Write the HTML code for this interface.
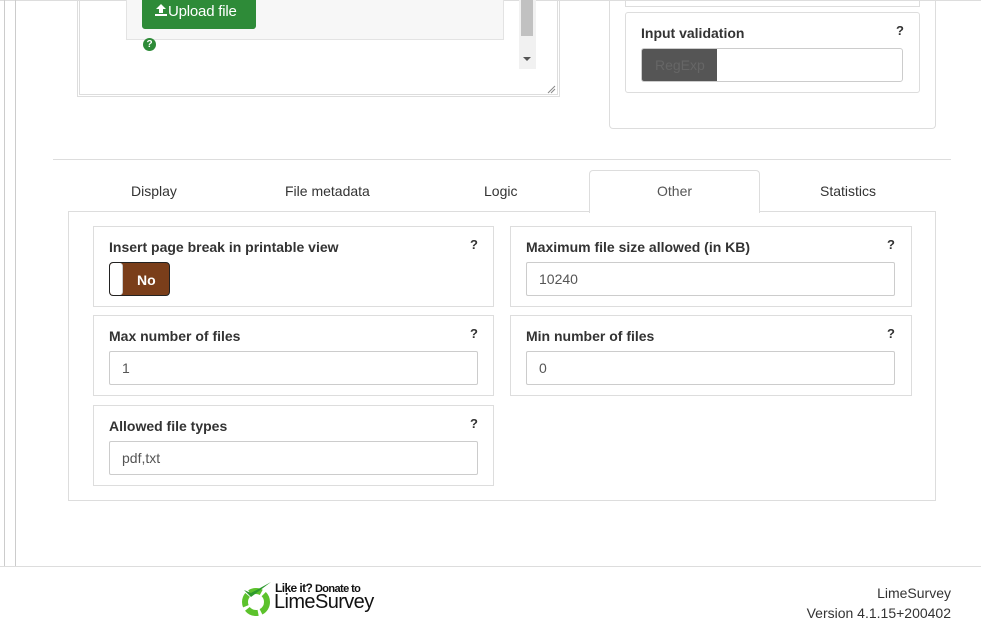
<!DOCTYPE html>
<html><head><meta charset="utf-8"><style>
*{box-sizing:border-box;margin:0;padding:0}
body{width:981px;height:626px;overflow:hidden;background:#fff;font-family:"Liberation Sans",sans-serif;position:relative;color:#333}
.a{position:absolute}
.lbl{font-size:14px;font-weight:bold;color:#333}
.q{font-size:13px;font-weight:bold;color:#333}
.inp{position:absolute;border:1px solid #ccc;border-radius:2px;height:34px;font-size:14px;color:#555;padding:8px 12px}
.box{position:absolute;border:1px solid #ddd}
.tab{position:absolute;top:183px;font-size:14px;color:#333}
</style></head><body>
<div class="a" style="left:0;top:0;width:981px;height:1px;background:#ddd"></div>
<div class="a" style="left:4px;top:0;width:1px;height:566px;background:#ccc"></div>
<div class="a" style="left:15px;top:0;width:1px;height:566px;background:#ccc"></div>
<div class="a" style="left:0;top:566px;width:981px;height:1px;background:#ddd"></div>

<div class="a" style="left:77px;top:0;width:483px;height:97px;border:1px solid #ddd;border-top:none"></div>
<div class="a" style="left:79px;top:0;width:479px;height:95px;border:1px solid #ddd;border-top:none"></div>
<div class="a" style="left:126px;top:0;width:378px;height:40px;background:#f7f7f7;border:1px solid #e3e3e3;border-top:none"></div>
<div class="a" style="left:142px;top:0;width:114px;height:29px;background:#2e8b38;border-radius:0 0 3px 3px;color:#fff;font-size:15px;padding:3px 0 0 12px;letter-spacing:-0.2px">
<svg width="14" height="14" viewBox="0 0 14 14" style="vertical-align:-1px"><path d="M7 1 L12 6 H9 V10 H5 V6 H2 Z" fill="#fff"/><rect x="1" y="11" width="12" height="2" fill="#fff"/></svg>Upload file</div>
<div class="a" style="left:143px;top:38px;width:13px;height:13px;border-radius:50%;background:#2e8b38;color:#fff;font-size:10px;font-weight:bold;text-align:center;line-height:13px">?</div>
<div class="a" style="left:519px;top:0;width:17px;height:69px;background:#f1f1f1"></div>
<div class="a" style="left:521px;top:0;width:12px;height:36px;background:#c1c1c1"></div>
<div class="a" style="left:523px;top:57px;width:0;height:0;border-left:4px solid transparent;border-right:4px solid transparent;border-top:4px solid #555"></div>
<svg class="a" style="left:546px;top:84px" width="10" height="10"><path d="M2 9 L9 2 M5 9 L9 5" stroke="#888" stroke-width="1"/></svg>

<div class="a" style="left:609px;top:0;width:327px;height:129px;border:1px solid #ddd;border-top:none;border-radius:0 0 4px 4px"></div>
<div class="a" style="left:625px;top:0;width:295px;height:7px;border:1px solid #ddd;border-top:none"></div>
<div class="a" style="left:625px;top:12px;width:295px;height:81px;border:1px solid #ddd;border-radius:3px"></div>
<div class="a lbl" style="left:641px;top:25px">Input validation</div>
<div class="a q" style="left:896px;top:23px">?</div>
<div class="a" style="left:641px;top:48px;width:262px;height:34px;border:1px solid #ccc;border-radius:3px;overflow:hidden">
<div style="width:75px;height:100%;background:#555;color:#666;font-size:14px;padding:8px 0 0 13px">RegExp</div></div>

<div class="a" style="left:53px;top:159px;width:898px;height:1px;background:#ddd"></div>
<div class="tab" style="left:131px">Display</div>
<div class="tab" style="left:285px">File metadata</div>
<div class="tab" style="left:484px">Logic</div>
<div class="a" style="left:589px;top:170px;width:171px;height:43px;border:1px solid #ddd;border-bottom:none;border-radius:4px 4px 0 0;background:#fff;z-index:2"></div>
<div class="tab" style="left:657px;color:#555;z-index:3">Other</div>
<div class="tab" style="left:820px">Statistics</div>
<div class="box" style="left:68px;top:211px;width:868px;height:290px"></div>

<div class="box" style="left:93px;top:226px;width:401px;height:81px"></div>
<div class="a lbl" style="left:109px;top:239px">Insert page break in printable view</div>
<div class="a q" style="left:470px;top:237px">?</div>
<div class="a" style="left:109px;top:262px;width:61px;height:34px;border:1px solid #222;border-radius:4px;background:#7a3e1a;overflow:hidden">
<div style="position:absolute;left:0;top:0;width:13px;height:100%;background:#fff;border-right:1px solid #ccc;border-radius:3px"></div>
<div style="position:absolute;left:27px;top:9px;color:#fff;font-size:14px;font-weight:bold">No</div></div>

<div class="box" style="left:510px;top:226px;width:402px;height:81px"></div>
<div class="a lbl" style="left:526px;top:239px">Maximum file size allowed (in KB)</div>
<div class="a q" style="left:887px;top:237px">?</div>
<div class="inp" style="left:526px;top:262px;width:369px">10240</div>

<div class="box" style="left:93px;top:315px;width:401px;height:81px"></div>
<div class="a lbl" style="left:109px;top:328px">Max number of files</div>
<div class="a q" style="left:470px;top:326px">?</div>
<div class="inp" style="left:109px;top:351px;width:369px">1</div>

<div class="box" style="left:510px;top:315px;width:402px;height:81px"></div>
<div class="a lbl" style="left:526px;top:328px">Min number of files</div>
<div class="a q" style="left:887px;top:326px">?</div>
<div class="inp" style="left:526px;top:351px;width:369px">0</div>

<div class="box" style="left:93px;top:405px;width:401px;height:81px"></div>
<div class="a lbl" style="left:109px;top:418px">Allowed file types</div>
<div class="a q" style="left:470px;top:416px">?</div>
<div class="inp" style="left:109px;top:441px;width:369px">pdf,txt</div>

<svg class="a" style="left:241px;top:580px" width="34" height="36" viewBox="0 0 34 36">
<circle cx="15" cy="22" r="11" fill="none" stroke="#5cc22c" stroke-width="6" stroke-dasharray="12 3"/>
<path d="M3 10 L10 17 L30 2 L10 13 Z" fill="#2e9a2e"/></svg>
<div class="a" style="left:275px;top:581px;font-size:12px;font-weight:bold;color:#111;letter-spacing:-0.6px">Like it? <span style="font-size:11px">Donate to</span></div>
<div class="a" style="left:274px;top:591px;font-size:20px;color:#111;letter-spacing:-0.6px">LimeSurvey</div>
<div class="a" style="right:30px;top:583px;font-size:14px;color:#333;text-align:right;line-height:20px">LimeSurvey<br>Version 4.1.15+200402</div>
</body></html>
